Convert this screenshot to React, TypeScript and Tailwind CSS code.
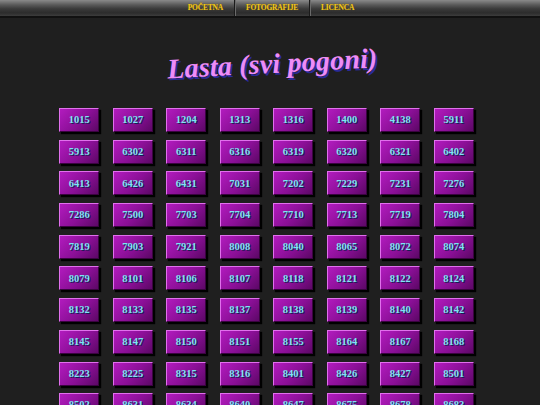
const rows: string[][] = [
  ["1015", "1027", "1204", "1313", "1316", "1400", "4138", "5911"],
  ["5913", "6302", "6311", "6316", "6319", "6320", "6321", "6402"],
  ["6413", "6426", "6431", "7031", "7202", "7229", "7231", "7276"],
  ["7286", "7500", "7703", "7704", "7710", "7713", "7719", "7804"],
  ["7819", "7903", "7921", "8008", "8040", "8065", "8072", "8074"],
  ["8079", "8101", "8106", "8107", "8118", "8121", "8122", "8124"],
  ["8132", "8133", "8135", "8137", "8138", "8139", "8140", "8142"],
  ["8145", "8147", "8150", "8151", "8155", "8164", "8167", "8168"],
  ["8223", "8225", "8315", "8316", "8401", "8426", "8427", "8501"],
  ["8502", "8631", "8634", "8640", "8647", "8675", "8678", "8683"],
];

const navItems = ["POČETNA", "FOTOGRAFIJE", "LICENCA"];

export default function App() {
  return (
    <div className="min-h-screen bg-[#1f1f1f] font-['Liberation_Serif',serif]">
      {/* top menu */}
      <div className="h-[18px] bg-[linear-gradient(#8a8a8a_0%,#5a5a5a_30%,#3a3a3a_55%,#2c2c2c_80%,#3c3c3c_100%)] border-b-2 border-[#111]">
        <div className="flex justify-center h-full pl-[2px]">
          {navItems.map((item, i) => (
            <div
              key={item}
              className={
                "flex items-center px-[11px] h-full text-[7.5px] font-bold text-[#f0c820] tracking-tight [text-shadow:0_0_1px_#7a5a00]" +
                (i > 0 ? " border-l border-[#1a1a1a] shadow-[inset_1px_0_0_#6a6a6a]" : "")
              }
            >
              {item}
            </div>
          ))}
        </div>
      </div>

      {/* title */}
      <div className="flex justify-center pt-[25px] h-[90px]">
        <h1 className="h-[40px] text-[28px] font-bold italic -rotate-3 text-[#ee8cf7] [text-shadow:2px_2px_0_#2a2a9a] pl-[4px] tracking-[0.2px]">
          Lasta (svi pogoni)
        </h1>
      </div>

      {/* vehicle grid */}
      <div className="flex justify-center pr-[7px]">
        <div className="grid grid-cols-[repeat(8,40px)] gap-x-[13.5px] gap-y-[7.7px]">
          {rows.flat().map((n) => (
            <a
              key={n}
              className="flex items-center justify-center w-[40px] h-[24px] bg-[linear-gradient(135deg,#b21bbe_0%,#8a0f96_55%,#5c0866_100%)] border-t border-l border-[#e070ec] border-r border-b border-r-[#3a0440] border-b-[#3a0440] shadow-[2px_2px_1px_#000] text-[10.5px] font-bold text-[#7fe3f5] [text-shadow:1px_1px_0_#1a1a55]"
            >
              {n}
            </a>
          ))}
        </div>
      </div>
    </div>
  );
}
